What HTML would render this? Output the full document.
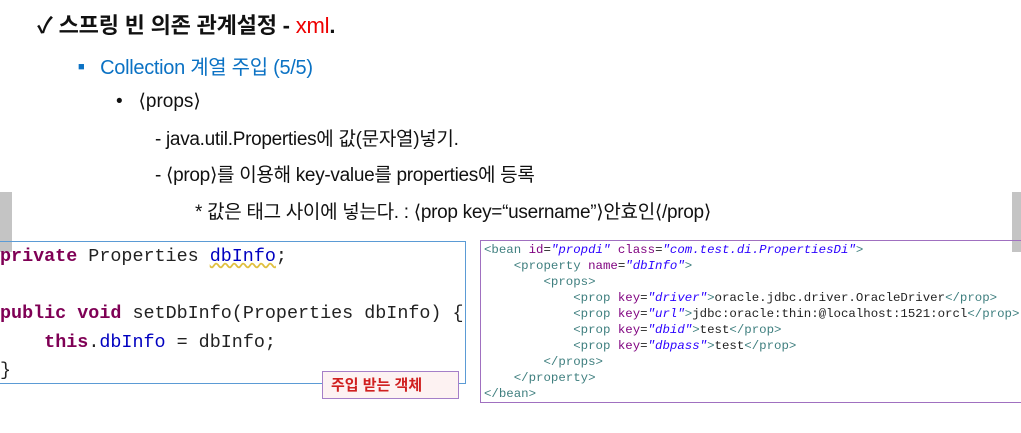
<!DOCTYPE html>
<html><head><meta charset="utf-8"><style>
body{margin:0;width:1021px;height:433px;background:#fff;position:relative;overflow:hidden;font-family:"Liberation Sans","Noto Sans CJK KR",sans-serif}
.t{position:absolute;white-space:nowrap}
.code{position:absolute;font-family:"Liberation Mono",monospace;white-space:pre}
.k{color:#7f0055;font-weight:bold}
.f{color:#0000c0}
.tag{color:#3f7f7f}
.at{color:#7f007f}
.v{color:#2a00ff;font-style:italic}
</style></head><body>
<div class="t" style="left:37px;top:8px;font-size:22px;font-weight:bold;color:#111;letter-spacing:-0.2px">✓ 스프링 빈 의존 관계설정 - <span style="color:#e00;font-weight:normal">xml</span>.</div>
<div class="t" style="left:78px;top:51px;font-size:20px;color:#0b72c4;letter-spacing:-0.3px"><span style="font-size:11px;vertical-align:4px">■</span>&nbsp;&nbsp; Collection 계열 주입 (5/5)</div>
<div class="t" style="left:116px;top:90px;font-size:19px;color:#111">•&nbsp;&nbsp; ⟨props⟩</div>
<div class="t" style="left:155px;top:124px;font-size:19px;color:#111;letter-spacing:-0.3px">- java.util.Properties에 값(문자열)넣기.</div>
<div class="t" style="left:155px;top:160px;font-size:19px;color:#111;letter-spacing:-0.3px">- ⟨prop⟩를 이용해 key-value를 properties에 등록</div>
<div class="t" style="left:195px;top:197px;font-size:19px;color:#111;letter-spacing:-0.3px">* 값은 태그 사이에 넣는다. : ⟨prop key=“username”⟩안효인⟨/prop⟩</div>
<div style="position:absolute;left:0;top:192px;width:12px;height:60px;background:#c4c4c4"></div>
<div style="position:absolute;left:1012px;top:192px;width:9px;height:60px;background:#c4c4c4"></div>
<div style="position:absolute;left:-2px;top:241px;width:466px;height:141px;border:1.5px solid #5b9bd5"></div>
<div class="code" style="left:0;top:243px;font-size:18.4px;line-height:28.5px;color:#222"><span class="k">private</span> Properties <span class="f" style="text-decoration:underline wavy #e0c040">dbInfo</span>;

<span class="k">public</span> <span class="k">void</span> setDbInfo(Properties dbInfo) {
    <span class="k">this</span>.<span class="f">dbInfo</span> = dbInfo;
}</div>
<div class="t" style="left:322px;top:371px;width:137px;height:28px;border:1.5px solid #a57fc8;background:#fdf2f2;color:#d02020;font-weight:bold;font-size:15px;line-height:27px;padding-left:8px;box-sizing:border-box">주입 받는 객체</div>
<div style="position:absolute;left:480px;top:240px;width:545px;height:161px;border:1.5px solid #a070c0"></div>
<div class="code" style="left:484px;top:242px;font-size:12.4px;line-height:16px;color:#222"><span class="tag">&lt;bean</span> <span class="at">id</span>=<span class="v">"propdi"</span> <span class="at">class</span>=<span class="v">"com.test.di.PropertiesDi"</span><span class="tag">&gt;</span>
    <span class="tag">&lt;property</span> <span class="at">name</span>=<span class="v">"dbInfo"</span><span class="tag">&gt;</span>
        <span class="tag">&lt;props&gt;</span>
            <span class="tag">&lt;prop</span> <span class="at">key</span>=<span class="v">"driver"</span><span class="tag">&gt;</span>oracle.jdbc.driver.OracleDriver<span class="tag">&lt;/prop&gt;</span>
            <span class="tag">&lt;prop</span> <span class="at">key</span>=<span class="v">"url"</span><span class="tag">&gt;</span>jdbc:oracle:thin:@localhost:1521:orcl<span class="tag">&lt;/prop&gt;</span>
            <span class="tag">&lt;prop</span> <span class="at">key</span>=<span class="v">"dbid"</span><span class="tag">&gt;</span>test<span class="tag">&lt;/prop&gt;</span>
            <span class="tag">&lt;prop</span> <span class="at">key</span>=<span class="v">"dbpass"</span><span class="tag">&gt;</span>test<span class="tag">&lt;/prop&gt;</span>
        <span class="tag">&lt;/props&gt;</span>
    <span class="tag">&lt;/property&gt;</span>
<span class="tag">&lt;/bean&gt;</span></div>
</body></html>
